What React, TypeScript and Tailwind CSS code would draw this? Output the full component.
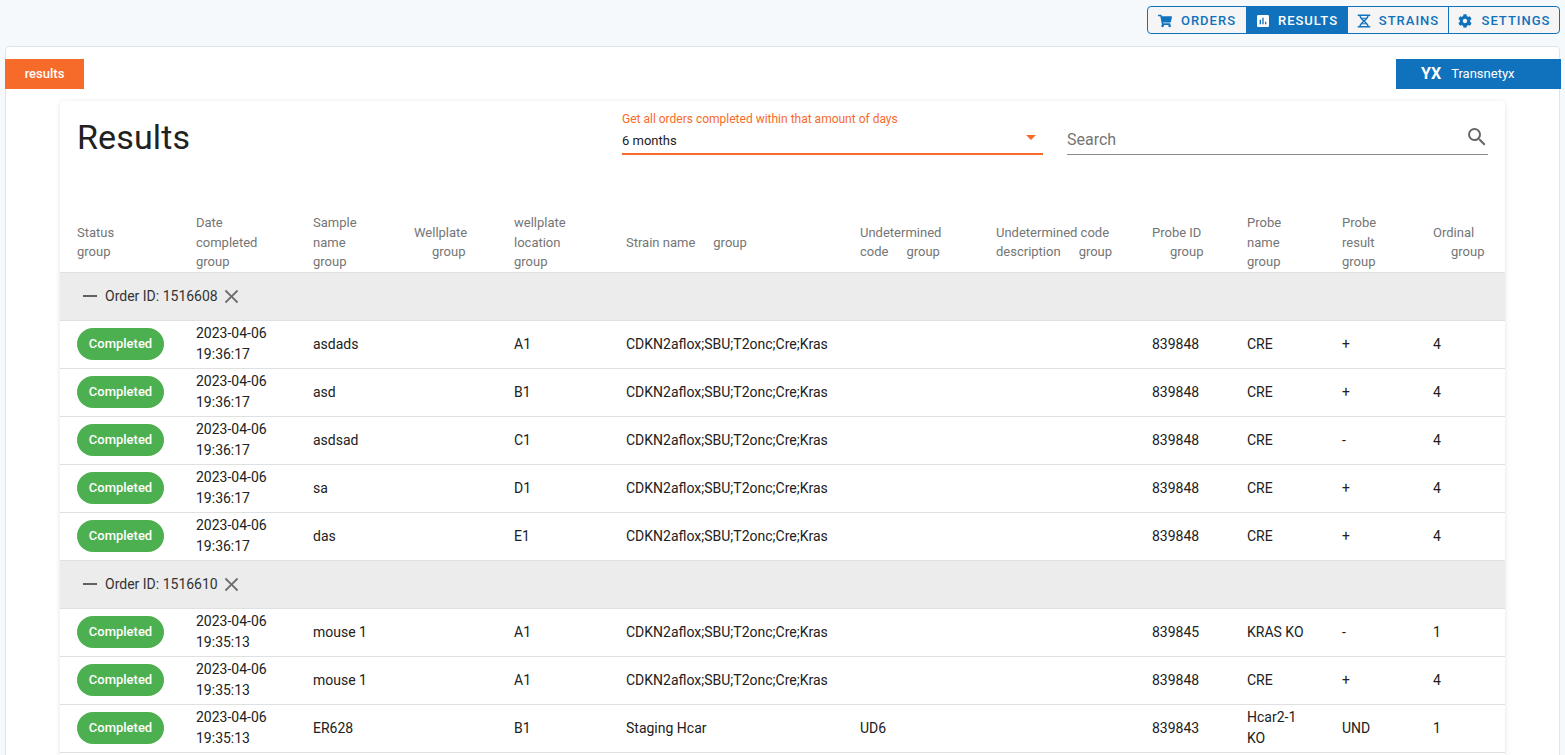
import React from "react";
import { MdAssessment, MdSearch, MdClose, MdRemove } from "react-icons/md";
import { FaShoppingCart, FaCog } from "react-icons/fa";

const font = { fontFamily: "Roboto, sans-serif" };

function Dna({ className }: { className?: string }) {
  return (
    <svg viewBox="0 0 16 16" className={className} fill="none" stroke="currentColor" strokeWidth="1.7">
      <path d="M1.5 1.5h13M1.5 14.5h13" strokeLinecap="round" />
      <path d="M3.5 2c0 4.5 9 7.500 9 12M12.500 2c0 4.500-9 7.500-9 12" />
      <path d="M4.500 4.800h7M4.500 11.200h7" strokeWidth="1.3" />
    </svg>
  );
}

const navItems = [
  { label: "ORDERS", Icon: FaShoppingCart, w: "w-[98px]", active: false, icon: "text-[14px]", gap: "gap-[9px]" },
  { label: "RESULTS", Icon: MdAssessment, w: "w-[101px]", active: true, icon: "text-[16px]", gap: "gap-[7px]" },
  { label: "STRAINS", Icon: Dna, w: "w-[101px]", active: false, icon: "w-[14px] h-[14px]", gap: "gap-[8px]" },
  { label: "SETTINGS", Icon: FaCog, w: "w-[111px]", active: false, icon: "text-[14px]", gap: "gap-[10px]" },
];

const strain = "CDKN2aflox;SBU;T2onc;Cre;Kras";
const rows1: string[][] = [
  ["19:36:17", "asdads", "A1", strain, "", "839848", "CRE", "+", "4"],
  ["19:36:17", "asd", "B1", strain, "", "839848", "CRE", "+", "4"],
  ["19:36:17", "asdsad", "C1", strain, "", "839848", "CRE", "-", "4"],
  ["19:36:17", "sa", "D1", strain, "", "839848", "CRE", "+", "4"],
  ["19:36:17", "das", "E1", strain, "", "839848", "CRE", "+", "4"],
];
const rows2: string[][] = [
  ["19:35:13", "mouse 1", "A1", strain, "", "839845", "KRAS KO", "-", "1"],
  ["19:35:13", "mouse 1", "A1", strain, "", "839848", "CRE", "+", "4"],
  ["19:35:13", "ER628", "B1", "Staging Hcar", "UD6", "839843", "Hcar2-1 KO", "UND", "1"],
];

const colWidths = ["w-[120px]", "w-[117px]", "w-[101px]", "w-[100px]", "w-[112px]", "w-[234px]", "w-[136px]", "w-[156px]", "w-[95px]", "w-[95px]", "w-[91px]", "w-[88px]"];

const headCell = "px-[16px] pt-[1px] pb-0 text-left align-middle font-normal text-[13px] leading-[19.5px] text-[#757575]";

function Head({ lines, indent, first }: { lines: string[]; indent?: boolean; first?: boolean }) {
  return (
    <th className={headCell}>
      <div className={first ? "ml-[1px]" : ""}>
        {lines.map((l, i) => (
          <div key={i} className="whitespace-nowrap">{l}</div>
        ))}
        {indent ? <div className="ml-[18px]">group</div> : <div>group</div>}
      </div>
    </th>
  );
}

function HeadInline({ first, last }: { first?: string; last: string }) {
  return (
    <th className={headCell}>
      {first ? <div className="whitespace-nowrap">{first}</div> : null}
      <div className="whitespace-nowrap">
        {last}
        <span className="ml-[18px]">group</span>
      </div>
    </th>
  );
}

function GroupRow({ id }: { id: string }) {
  return (
    <tr className="h-[48px] bg-[#ececec] border-b border-[#e0e0e0]">
      <td colSpan={12} className="px-[16px] py-0">
        <div className="flex items-center text-[14px] text-[#333333] h-[47px] pl-[2px]">
          <MdRemove className="text-[24px] text-[#616161] mr-[3px]" />
          <span>Order ID: {id}</span>
          <MdClose className="text-[23px] text-[#6e6e6e] ml-[2px]" />
        </div>
      </td>
    </tr>
  );
}

function DataRow({ r }: { r: string[] }) {
  const cell = "px-[16px] py-0 align-middle text-[14px] leading-[21px] text-[#212121]";
  return (
    <tr className="h-[48px] border-b border-[#e0e0e0]">
      <td className={cell}>
        <span className="ml-[1px] inline-flex items-center justify-center w-[87px] h-[32px] pb-[2px] rounded-[16px] bg-[#4caf50] text-white text-[13px] font-medium">
          Completed
        </span>
      </td>
      <td className={cell}>
        <div>2023-04-06</div>
        <div>{r[0]}</div>
      </td>
      <td className={cell}>{r[1]}</td>
      <td className={cell}></td>
      <td className={cell}>{r[2]}</td>
      <td className={cell + " whitespace-nowrap"}>{r[3]}</td>
      <td className={cell}>{r[4]}</td>
      <td className={cell}></td>
      <td className={cell}>{r[5]}</td>
      <td className={cell}>{r[6]}</td>
      <td className={cell}>{r[7]}</td>
      <td className={cell}>{r[8]}</td>
    </tr>
  );
}

export default function App() {
  return (
    <div style={font} className="h-screen overflow-hidden bg-[#f5f9fc]">
      <div className="h-[47px] flex justify-end items-start pt-[6px] pr-[5px]">
        <div className="flex h-[28px] rounded-[4px] border border-[#1072bd] overflow-hidden bg-[#f5f5f5]">
          {navItems.map(({ label, Icon, w, active, icon, gap }, i) => (
            <div
              key={label}
              className={`${w} ${gap} pt-[1px] flex items-center justify-center text-[13px] font-medium tracking-[1px] ${
                active ? "bg-[#1072bd] text-white" : "text-[#1072bd]"
              } ${i > 1 ? "border-l border-[#1072bd]" : ""}`}
            >
              <Icon className={icon} />
              <span>{label}</span>
            </div>
          ))}
        </div>
      </div>

      <div className="mx-[6px] bg-white rounded-[4px] shadow-[0_0_0_1px_#dfe4e9] h-[900px]">
        <div className="pt-[12px] flex justify-between -ml-[1px] -mr-[2px]">
          <div className="w-[79px] h-[30px] bg-[#f76b2a] text-white text-[13px] font-medium flex items-center justify-center">
            results
          </div>
          <div className="w-[165px] h-[30px] bg-[#1072bd] text-white text-[13px] font-normal flex items-center pl-[25px] gap-[10px]">
            <span className="font-bold text-[16px]">YX</span>
            <span>Transnetyx</span>
          </div>
        </div>

        <div className="mx-[54px] mt-[12px] bg-white rounded-[4px] shadow-[0_1px_5px_rgba(0,0,0,0.12)]">
          <div className="flex h-[111px] pl-[17px] pr-[17px]">
            <h1 className="text-[34px] leading-[40px] tracking-[0.15px] text-[#212121] font-normal mt-[16px] w-[545px] shrink-0">Results</h1>
            <div className="w-[421px] shrink-0 mt-[11px]">
              <div className="text-[12px] leading-[14px] text-[#f76b2a]">Get all orders completed within that amount of days</div>
              <div className="flex items-center justify-between h-[29px] pt-[2px] border-b-2 border-[#f76b2a] text-[13px] text-[#212121]">
                <span>6 months</span>
                <span className="w-0 h-0 border-x-[5px] border-x-transparent border-t-[5px] border-t-[#f76b2a] mr-[7px] -mt-[6px]"></span>
              </div>
            </div>
            <div className="w-[421px] shrink-0 ml-[24px] mt-[25px]">
              <div className="flex items-center justify-between h-[29px] border-b border-[#8a8a8a] text-[16px] text-[#757575]">
                <span>Search</span>
                <MdSearch className="text-[24px] text-[#666666] -mt-[6px] -mr-[1px]" />
              </div>
            </div>
          </div>

          <table className="w-[1445px] table-fixed border-collapse">
            <colgroup>
              {colWidths.map((c, i) => (
                <col key={i} className={c} />
              ))}
            </colgroup>
            <thead>
              <tr className="h-[60px] border-b border-[#e0e0e0]">
                <Head lines={["Status"]} first />
                <Head lines={["Date", "completed"]} />
                <Head lines={["Sample", "name"]} />
                <Head lines={["Wellplate"]} indent />
                <Head lines={["wellplate", "location"]} />
                <HeadInline last="Strain name" />
                <HeadInline first="Undetermined" last="code" />
                <HeadInline first="Undetermined code" last="description" />
                <Head lines={["Probe ID"]} indent />
                <Head lines={["Probe", "name"]} />
                <Head lines={["Probe", "result"]} />
                <Head lines={["Ordinal"]} indent />
              </tr>
            </thead>
            <tbody>
              <GroupRow id="1516608" />
              {rows1.map((r, i) => (
                <DataRow key={i} r={r} />
              ))}
              <GroupRow id="1516610" />
              {rows2.map((r, i) => (
                <DataRow key={i} r={r} />
              ))}
              <tr className="h-[48px]">
                <td colSpan={12}></td>
              </tr>
            </tbody>
          </table>
        </div>
      </div>
    </div>
  );
}
